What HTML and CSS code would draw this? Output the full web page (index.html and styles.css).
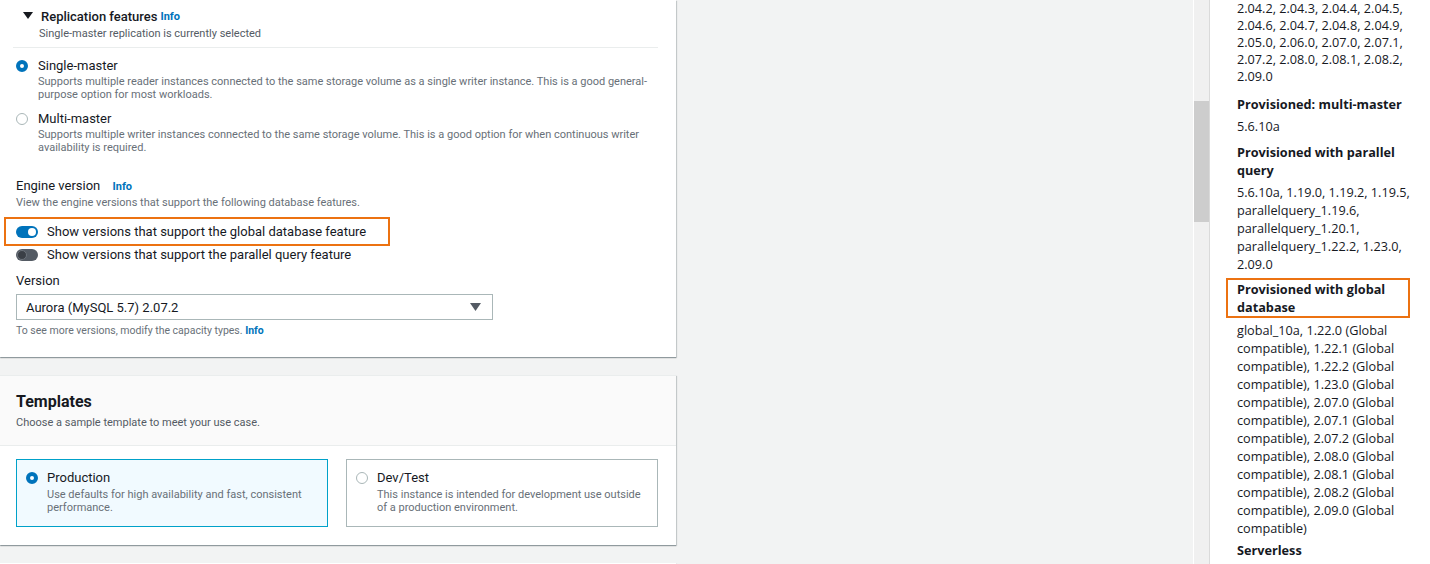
FILE: index.html
```html
<!DOCTYPE html>
<html lang="en">
<head>
<meta charset="utf-8">
<title>Create database</title>
<link rel="stylesheet" href="styles.css">
</head>
<body>
<div class="page">
  <main class="main">
    <section class="panel panel-engine">
      <div class="expander">
        <div class="exp-head">
          <svg class="caret" width="10" height="8" viewBox="0 0 10 8"><polygon points="0,0 10,0 5,7" fill="#16191f"/></svg>
          <span class="exp-title">Replication features</span>
          <a class="info info-tight">Info</a>
        </div>
        <div class="exp-sub">Single-master replication is currently selected</div>
      </div>
      <div class="divider"></div>

      <div class="radio-group">
        <div class="radio-row">
          <span class="radio radio-on"></span>
          <div class="radio-text">
            <div class="radio-label">Single-master</div>
            <div class="radio-desc">Supports multiple reader instances connected to the same storage volume as a single writer instance. This is a good general-purpose option for most workloads.</div>
          </div>
        </div>
        <div class="radio-row">
          <span class="radio"></span>
          <div class="radio-text">
            <div class="radio-label">Multi-master</div>
            <div class="radio-desc">Supports multiple writer instances connected to the same storage volume. This is a good option for when continuous writer availability is required.</div>
          </div>
        </div>
      </div>

      <div class="field-engine">
        <div class="field-label">Engine version <a class="info">Info</a></div>
        <div class="field-desc">View the engine versions that support the following database features.</div>
        <div class="toggle-row toggle-highlight">
          <span class="toggle toggle-on"><span class="knob"></span></span>
          <span class="toggle-label">Show versions that support the global database feature</span>
        </div>
        <div class="toggle-row">
          <span class="toggle toggle-off"><span class="knob"></span></span>
          <span class="toggle-label">Show versions that support the parallel query feature</span>
        </div>
      </div>

      <div class="field-version">
        <div class="field-label">Version</div>
        <div class="select">
          <span>Aurora (MySQL 5.7) 2.07.2</span>
          <svg class="select-arrow" width="11" height="8" viewBox="0 0 11 8"><polygon points="0,0 11,0 5.5,8" fill="#545b64"/></svg>
        </div>
        <div class="field-hint">To see more versions, modify the capacity types. <a class="info">Info</a></div>
      </div>
    </section>

    <section class="panel panel-templates">
      <header class="panel-header">
        <h2>Templates</h2>
        <p>Choose a sample template to meet your use case.</p>
      </header>
      <div class="tiles">
        <div class="tile tile-selected">
          <span class="radio radio-on"></span>
          <div class="radio-text">
            <div class="radio-label">Production</div>
            <div class="radio-desc">Use defaults for high availability and fast, consistent performance.</div>
          </div>
        </div>
        <div class="tile">
          <span class="radio"></span>
          <div class="radio-text">
            <div class="radio-label">Dev/Test</div>
            <div class="radio-desc">This instance is intended for development use outside of a production environment.</div>
          </div>
        </div>
      </div>
    </section>

    <section class="panel panel-next"></section>
  </main>

  <div class="scrollbar"><div class="thumb"></div></div>

  <aside class="help">
    <p class="help-first">2.04.2, 2.04.3, 2.04.4, 2.04.5, 2.04.6, 2.04.7, 2.04.8, 2.04.9, 2.05.0, 2.06.0, 2.07.0, 2.07.1, 2.07.2, 2.08.0, 2.08.1, 2.08.2, 2.09.0</p>
    <h3 class="help-second">Provisioned: multi-master</h3>
    <p>5.6.10a</p>
    <h3>Provisioned with parallel query</h3>
    <p>5.6.10a, 1.19.0, 1.19.2, 1.19.5, parallelquery_1.19.6, parallelquery_1.20.1, parallelquery_1.22.2, 1.23.0, 2.09.0</p>
    <h3 class="help-highlight">Provisioned with global database</h3>
    <p>global_10a, 1.22.0 (Global compatible), 1.22.1 (Global compatible), 1.22.2 (Global compatible), 1.23.0 (Global compatible), 2.07.0 (Global compatible), 2.07.1 (Global compatible), 2.07.2 (Global compatible), 2.08.0 (Global compatible), 2.08.1 (Global compatible), 2.08.2 (Global compatible), 2.09.0 (Global compatible)</p>
    <h3 class="help-last">Serverless</h3>
  </aside>
</div>
</body>
</html>
```

FILE: styles.css
```css
* { box-sizing: border-box; }

html, body {
  margin: 0;
  padding: 0;
  height: 564px;
  overflow: hidden;
}

body {
  font-family: Roboto, "Liberation Sans", sans-serif;
  color: #16191f;
  background: #f2f3f3;
}

.page {
  display: flex;
  height: 564px;
  overflow: hidden;
}

.main {
  flex: 1;
  background: #f2f3f3;
  display: flex;
  flex-direction: column;
  gap: 18px;
  overflow: hidden;
}

.panel {
  flex: none;
  width: 676px;
  background: #fff;
  box-shadow: 0 1px 1px 0 rgba(0, 28, 36, 0.3), 1px 1px 1px 0 rgba(0, 28, 36, 0.15);
}

.panel-engine {
  padding: 6px 16px 19px 16px;
}

/* expander */
.exp-head {
  display: flex;
  align-items: center;
  height: 20px;
  font-size: 13px;
}
.caret {
  margin: 0 8px 0 7px;
}
.exp-title {
  font-weight: 500;
  color: #16191f;
}
.info {
  color: #0073bb;
  font-weight: 700;
  font-size: 11px;
  margin-left: 9px;
}
.info-tight { margin-left: 3px; }

.exp-sub {
  padding-left: 23px;
  font-size: 11px;
  line-height: 16px;
  color: #545b64;
}

.divider {
  height: 1px;
  background: #eaeded;
  margin: 5px 2px 0 -3px;
}

/* radios */
.radio-group {
  display: flex;
  flex-direction: column;
  gap: 8px;
  margin-top: 9px;
}
.radio-row {
  display: flex;
  align-items: flex-start;
  gap: 10px;
}
.radio-row + .radio-row {
  margin-top: 1px;
}
.radio {
  flex: none;
  width: 12px;
  height: 12px;
  border-radius: 50%;
  border: 1px solid #aab7b8;
  background: #fff;
  margin-top: 3px;
}
.radio-on {
  border: 4px solid #0073bb;
}
.radio-label {
  font-size: 13px;
  line-height: 18px;
}
.radio-desc {
  font-size: 11px;
  line-height: 13px;
  color: #687078;
}

/* engine field */
.field-engine {
  margin-top: 23px;
}
.field-label {
  font-size: 13px;
  line-height: 18px;
}
.field-desc {
  font-size: 11px;
  line-height: 14px;
  color: #687078;
}
.toggle-row {
  display: flex;
  align-items: center;
  gap: 9px;
  height: 17px;
}
.toggle-highlight {
  margin: 7px 0 0 -12px;
  width: 386px;
  height: 29px;
  border: 2px solid #ec7211;
  padding-left: 10px;
}
.toggle {
  position: relative;
  flex: none;
  width: 22px;
  height: 12px;
  border-radius: 6px;
}
.toggle-on { background: #0073bb; }
.toggle-off { background: #545b64; }
.knob {
  position: absolute;
  top: 2px;
  width: 8px;
  height: 8px;
  border-radius: 50%;
}
.toggle-on .knob { right: 2px; background: #fff; }
.toggle-off .knob { left: 1px; top: 1px; width: 10px; height: 10px; background: #3a3f46; border: 1px solid #6d747c; }
.toggle-label {
  font-size: 13px;
  line-height: 18px;
}

/* version field */
.field-version {
  margin-top: 9px;
}
.select {
  margin-top: 4px;
  width: 477px;
  height: 26px;
  border: 1px solid #aab7b8;
  display: flex;
  align-items: center;
  justify-content: space-between;
  padding: 0 11px 0 9px;
  font-size: 13px;
}
.field-hint {
  margin-top: 4px;
  font-size: 10.5px;
  line-height: 14px;
  color: #687078;
}
.field-hint .info { margin-left: 0; font-size: 10.5px; }

/* templates */
.panel-templates {
  border-top: 1px solid #eaeded;
}
.panel-header {
  background: #fafafa;
  padding: 15px 16px 14px;
  border-bottom: 1px solid #eaeded;
}
.panel-header h2 {
  margin: 0;
  font-size: 16px;
  line-height: 22px;
  font-weight: 700;
}
.panel-header p {
  margin: 2px 0 0;
  font-size: 11px;
  line-height: 16px;
  color: #545b64;
}
.tiles {
  display: flex;
  gap: 18px;
  padding: 13px 18px 18px 16px;
}
.tile {
  flex: 1;
  display: flex;
  gap: 9px;
  align-items: flex-start;
  height: 68px;
  border: 1px solid #aab7b8;
  padding: 9px 10px 0 9px;
}
.tile-selected {
  background: #f1faff;
  border-color: #00a1c9;
}
.tile .radio-desc { margin-top: 1px; }

.panel-next {
  height: 5px;
}

/* scrollbar */
.scrollbar {
  flex: none;
  width: 17px;
  background: #f0f0f0;
  border-left: 1px solid #fff;
  border-right: 1px solid #dadada;
  padding-top: 101px;
}
.thumb {
  height: 121px;
  background: #cdcdcd;
}

/* help panel */
.help {
  flex: none;
  width: 220px;
  background: #fff;
  padding: 0 12px 0 27px;
  font-family: "Open Sans", "Noto Sans", sans-serif;
  font-size: 12.7px;
  line-height: 18px;
  color: #16191f;
  overflow: hidden;
}
.help p {
  margin: 0;
}
.help-first {
  line-height: 17px;
}
.help h3 {
  margin: 8px 0 4px;
  font-size: 12.7px;
  line-height: 18px;
  font-weight: 700;
}
.help .help-second {
  margin-top: 10px;
}
.help .help-highlight {
  margin: 5px 8px 3px -11px;
  padding: 0 9px;
  border: 2px solid #ec7211;
}
.help .help-last {
  margin-top: 4px;
}
```
